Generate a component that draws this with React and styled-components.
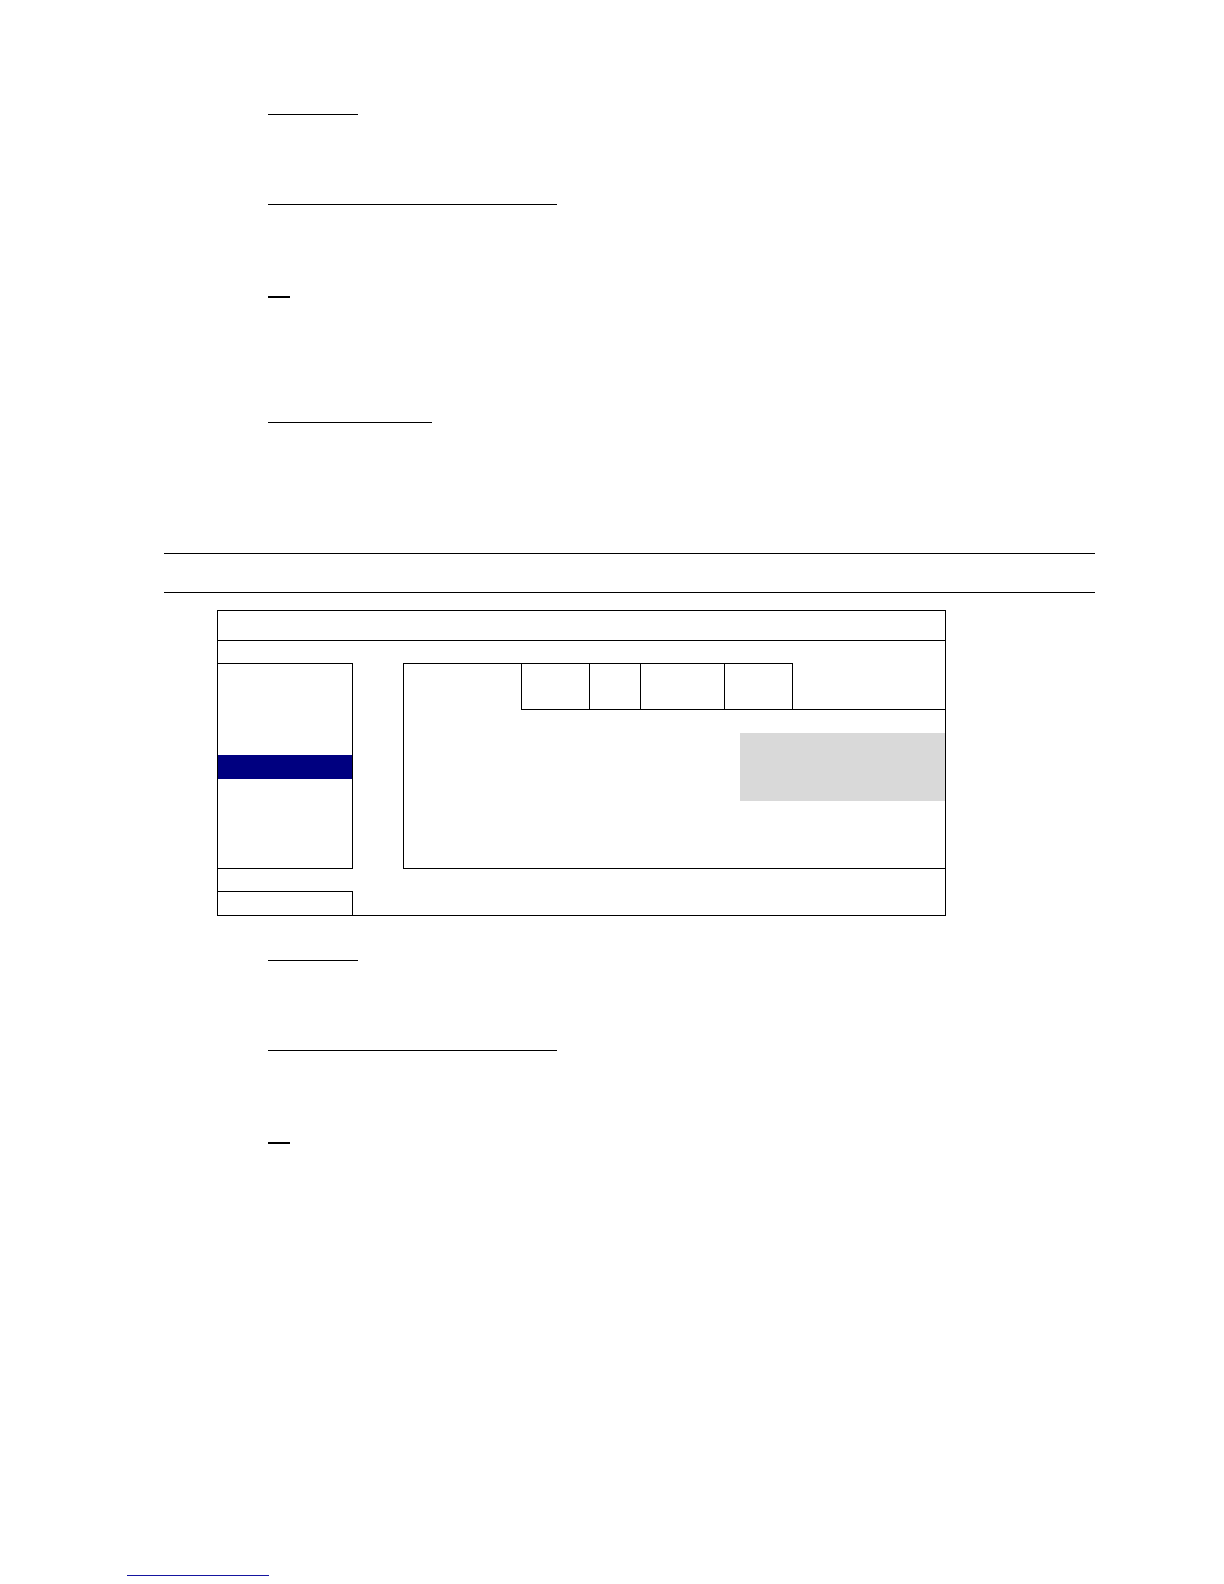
import React from 'react';
import styled, { createGlobalStyle } from 'styled-components';

const GlobalStyle = createGlobalStyle`
  html, body {
    margin: 0;
    padding: 0;
    background: #ffffff;
    font-family: "Liberation Sans", Arial, sans-serif;
  }
`;

const Page = styled.div`
  width: 1224px;
  min-height: 1584px;
  display: flex;
  flex-direction: column;
  align-items: flex-start;
  padding-top: 114px;
  box-sizing: border-box;
`;

const Underline = styled.div`
  margin-top: ${p => p.gap || 0}px;
  margin-left: ${p => p.left || 268}px;
  width: ${p => p.width}px;
  height: ${p => p.thick || 1}px;
  background: ${p => p.color || '#000'};
`;

const Rule = styled.div`
  margin-top: ${p => p.gap}px;
  margin-left: 164px;
  width: 931px;
  height: 1px;
  background: #000;
`;

const MenuBox = styled.div`
  margin-top: 17px;
  margin-left: 217px;
  width: 729px;
  border: 1px solid #000;
  box-sizing: border-box;
  display: flex;
  flex-direction: column;
`;

const TitleBar = styled.div`
  height: 29px;
  border-bottom: 1px solid #000;
`;

const Body = styled.div`
  display: flex;
  padding-top: 22px;
  gap: 50px;
`;

const ListBox = styled.div`
  width: 135px;
  height: 206px;
  box-sizing: border-box;
  border-top: 1px solid #000;
  border-right: 1px solid #000;
  border-bottom: 1px solid #000;
  padding-top: 91px;
`;

const ListItem = styled.div`
  height: 24px;
  background: ${p => (p.active ? '#000080' : 'transparent')};
`;

const Panel = styled.div`
  flex: 1;
  height: 206px;
  box-sizing: border-box;
  border-left: 1px solid #000;
  border-bottom: 1px solid #000;
  display: flex;
  flex-direction: column;
`;

const TabRow = styled.div`
  display: flex;
  height: 47px;
`;

const LabelCell = styled.div`
  width: 117px;
  border-top: 1px solid #000;
`;

const Tab = styled.div`
  width: ${p => p.width}px;
  box-sizing: border-box;
  border-top: 1px solid #000;
  border-bottom: 1px solid #000;
  border-left: 1px solid #000;
  border-right: ${p => (p.last ? '1px solid #000' : 'none')};
`;

const TabFiller = styled.div`
  flex: 1;
  border-bottom: 1px solid #000;
`;

const PanelContent = styled.div`
  display: flex;
  justify-content: flex-end;
  padding-top: 23px;
`;

const InfoBox = styled.div`
  width: 205px;
  height: 68px;
  background: #d9d9d9;
`;

const Footer = styled.div`
  height: 46px;
  padding-top: 22px;
  box-sizing: border-box;
`;

const FooterButton = styled.div`
  width: 135px;
  height: 24px;
  box-sizing: border-box;
  border-top: 1px solid #000;
  border-right: 1px solid #000;
`;

const tabs = [
  { width: 68 },
  { width: 51 },
  { width: 84 },
  { width: 69, last: true },
];

export default function App() {
  return (
    <>
      <GlobalStyle />
      <Page>
        <Underline width={90} />
        <Underline gap={89} width={289} />
        <Underline gap={91} width={22} thick={2} />
        <Underline gap={124} width={164} />

        <Rule gap={130} />
        <Rule gap={38} />

        <MenuBox>
          <TitleBar />
          <Body>
            <ListBox>
              <ListItem active />
            </ListBox>
            <Panel>
              <TabRow>
                <LabelCell />
                {tabs.map((t, i) => (
                  <Tab key={i} width={t.width} last={t.last} />
                ))}
                <TabFiller />
              </TabRow>
              <PanelContent>
                <InfoBox />
              </PanelContent>
            </Panel>
          </Body>
          <Footer>
            <FooterButton />
          </Footer>
        </MenuBox>

        <Underline gap={44} width={90} />
        <Underline gap={89} width={289} />
        <Underline gap={91} width={22} thick={2} />

        <Underline gap={431} left={127} width={142} color="#1515a0" />
      </Page>
    </>
  );
}
